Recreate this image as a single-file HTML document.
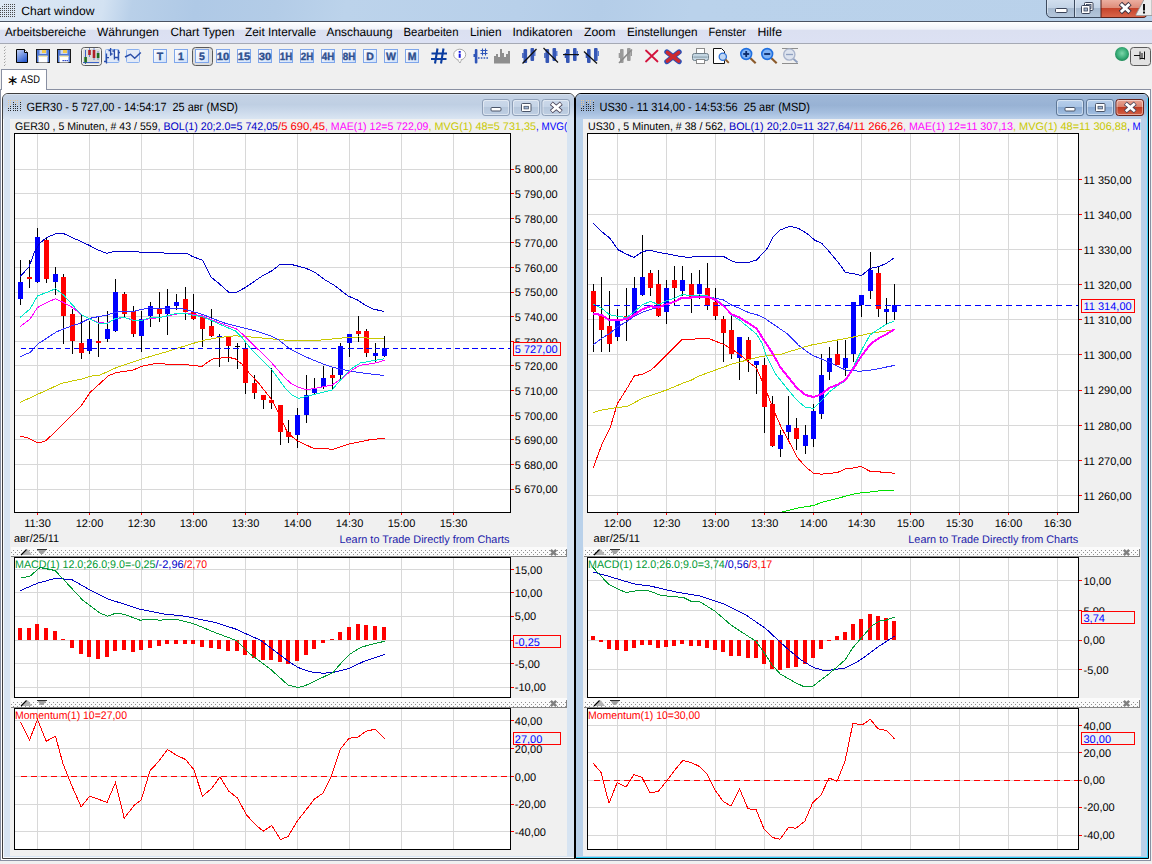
<!DOCTYPE html>
<html><head><meta charset="utf-8"><title>Chart window</title>
<style>
html,body{margin:0;padding:0;background:#F0F0F0;}
body{width:1152px;height:864px;overflow:hidden;position:relative;font-family:"Liberation Sans", Arial, sans-serif;}
.abs{position:absolute;}
#titlebar{left:0;top:0;width:1152px;height:21px;background:linear-gradient(100deg,#DCE8F5 0,#D3E2F2 9%,#B9D0E9 11.5%,#AFC9E6 17%,#B3CCE7 24%,#BCD3EB 30%,#B8D0EA 45%,#B4CDE8 52%,#BAD2EB 60%,#B9D1EA 100%);}
#menubar{left:0;top:22px;width:1152px;height:21px;background:linear-gradient(180deg,#FFFFFF 0,#F1F3FA 34%,#DBE0F1 40%,#DCE1F3 100%);}
#toolbar{left:0;top:44px;width:1152px;height:25px;background:#F0F0F0;}
.win{box-sizing:border-box;}
svg text{font-family:"Liberation Sans", Arial, sans-serif;white-space:pre;}
</style></head><body>
<div id="titlebar" class="abs"></div>
<div class="abs" style="left:0;top:21px;width:1152px;height:1px;background:#4A5262"></div>
<div id="menubar" class="abs"></div>
<div class="abs" style="left:0;top:43px;width:1152px;height:1px;background:#A5A9B4"></div>
<div id="toolbar" class="abs"></div>
<!-- tab strip / mdi client -->
<div class="abs" style="left:0;top:89px;width:1151px;height:772px;box-sizing:border-box;border:1px solid #8990A2;background:#fff"></div>
<div class="abs" style="left:1px;top:69px;width:46px;height:21px;background:#fff;border:1px solid #8990A2;border-bottom:none;box-sizing:border-box"></div>
<!-- left window (inactive) -->
<div class="abs win" style="left:2px;top:93px;width:573px;height:766px;border:1px solid #3E3E3E;border-radius:6px 6px 0 0;background:#D7E4F2"></div>
<div class="abs" style="left:3px;top:94px;width:571px;height:25px;border-radius:5px 5px 0 0;background:linear-gradient(180deg,#E0E9F4 0,#C5D3E5 6%,#BFCFE3 42%,#CCDAEB 72%,#DAE5F2 100%)"></div>
<div class="abs" style="left:3px;top:119px;width:1px;height:739px;background:#F4F8FC"></div>
<div class="abs" style="left:3px;top:857px;width:571px;height:1px;background:#F8FAFD"></div>
<div class="abs" style="left:10px;top:119px;width:557px;height:737px;background:#F0F0F0"></div>
<!-- right window (active) -->
<div class="abs win" style="left:575px;top:93px;width:574px;height:766px;border:1px solid #000;border-radius:6px 6px 0 0;background:#B9D1EA"></div>
<div class="abs" style="left:576px;top:94px;width:572px;height:25px;border-radius:5px 5px 0 0;background:linear-gradient(180deg,#C8D8EC 0,#9FB8D8 6%,#98B2D4 45%,#A6BFDF 75%,#BBD0EA 100%)"></div>
<div class="abs" style="left:574px;top:98px;width:1px;height:761px;background:#000"></div>
<div class="abs" style="left:1147px;top:98px;width:1px;height:760px;background:#3FD6FF"></div>
<div class="abs" style="left:576px;top:857px;width:572px;height:1px;background:#28CFF8"></div>
<div class="abs" style="left:583px;top:119px;width:558px;height:737px;background:#F0F0F0"></div>
<!-- bottom -->
<div class="abs" style="left:0;top:861px;width:1152px;height:3px;background:#F0F0F0"></div>
<svg class="abs" style="left:0;top:0" width="1152" height="864" viewBox="0 0 1152 864" shape-rendering="crispEdges" text-rendering="geometricPrecision">
<defs><pattern id="dots" width="4" height="4" patternUnits="userSpaceOnUse"><rect x="1" y="2" width="1" height="1" fill="#909090"/><rect x="3" y="0" width="1" height="1" fill="#909090"/></pattern><clipPath id="clipL"><rect x="10" y="119" width="557" height="737"/></clipPath><clipPath id="clipR"><rect x="583" y="119" width="558" height="737"/></clipPath></defs>
<g clip-path="url(#clipL)"><rect x="14" y="133" width="497" height="380" fill="#000" /><rect x="15" y="134" width="495" height="378" fill="#fff" /><rect x="37" y="134" width="1" height="378" fill="#D8D8D8" /><rect x="89" y="134" width="1" height="378" fill="#D8D8D8" /><rect x="141" y="134" width="1" height="378" fill="#D8D8D8" /><rect x="193" y="134" width="1" height="378" fill="#D8D8D8" /><rect x="245" y="134" width="1" height="378" fill="#D8D8D8" /><rect x="297" y="134" width="1" height="378" fill="#D8D8D8" /><rect x="349" y="134" width="1" height="378" fill="#D8D8D8" /><rect x="401" y="134" width="1" height="378" fill="#D8D8D8" /><rect x="453" y="134" width="1" height="378" fill="#D8D8D8" /><rect x="15" y="169" width="495" height="1" fill="#D8D8D8" /><rect x="15" y="193" width="495" height="1" fill="#D8D8D8" /><rect x="15" y="218" width="495" height="1" fill="#D8D8D8" /><rect x="15" y="242" width="495" height="1" fill="#D8D8D8" /><rect x="15" y="267" width="495" height="1" fill="#D8D8D8" /><rect x="15" y="292" width="495" height="1" fill="#D8D8D8" /><rect x="15" y="316" width="495" height="1" fill="#D8D8D8" /><rect x="15" y="341" width="495" height="1" fill="#D8D8D8" /><rect x="15" y="365" width="495" height="1" fill="#D8D8D8" /><rect x="15" y="390" width="495" height="1" fill="#D8D8D8" /><rect x="15" y="415" width="495" height="1" fill="#D8D8D8" /><rect x="15" y="439" width="495" height="1" fill="#D8D8D8" /><rect x="15" y="464" width="495" height="1" fill="#D8D8D8" /><rect x="15" y="489" width="495" height="1" fill="#D8D8D8" /><rect x="20" y="260" width="1" height="45" fill="#000" /><rect x="18" y="282" width="5" height="17" fill="#0000FF" /><rect x="29" y="260" width="1" height="28" fill="#000" /><rect x="27" y="277" width="5" height="2" fill="#FF0000" /><rect x="37" y="228" width="1" height="55" fill="#000" /><rect x="35" y="237" width="5" height="45" fill="#0000FF" /><rect x="46" y="238" width="1" height="45" fill="#000" /><rect x="44" y="240" width="5" height="39" fill="#FF0000" /><rect x="55" y="267" width="1" height="28" fill="#000" /><rect x="53" y="274" width="5" height="8" fill="#0000FF" /><rect x="63" y="274" width="1" height="70" fill="#000" /><rect x="61" y="277" width="5" height="39" fill="#FF0000" /><rect x="72" y="309" width="1" height="45" fill="#000" /><rect x="70" y="314" width="5" height="27" fill="#FF0000" /><rect x="81" y="315" width="1" height="44" fill="#000" /><rect x="79" y="343" width="5" height="10" fill="#FF0000" /><rect x="89" y="321" width="1" height="33" fill="#000" /><rect x="87" y="339" width="5" height="12" fill="#0000FF" /><rect x="98" y="316" width="1" height="41" fill="#000" /><rect x="96" y="341" width="5" height="2" fill="#FF0000" /><rect x="107" y="311" width="1" height="31" fill="#000" /><rect x="105" y="329" width="5" height="10" fill="#0000FF" /><rect x="115" y="279" width="1" height="53" fill="#000" /><rect x="113" y="292" width="5" height="39" fill="#0000FF" /><rect x="124" y="292" width="1" height="25" fill="#000" /><rect x="122" y="294" width="5" height="20" fill="#FF0000" /><rect x="133" y="306" width="1" height="31" fill="#000" /><rect x="131" y="311" width="5" height="23" fill="#FF0000" /><rect x="141" y="311" width="1" height="41" fill="#000" /><rect x="139" y="319" width="5" height="17" fill="#0000FF" /><rect x="150" y="302" width="1" height="25" fill="#000" /><rect x="148" y="306" width="5" height="10" fill="#0000FF" /><rect x="159" y="292" width="1" height="30" fill="#000" /><rect x="157" y="309" width="5" height="5" fill="#FF0000" /><rect x="167" y="289" width="1" height="46" fill="#000" /><rect x="165" y="306" width="5" height="8" fill="#0000FF" /><rect x="176" y="294" width="1" height="16" fill="#000" /><rect x="174" y="302" width="5" height="4" fill="#0000FF" /><rect x="185" y="287" width="1" height="33" fill="#000" /><rect x="183" y="299" width="5" height="13" fill="#FF0000" /><rect x="193" y="294" width="1" height="26" fill="#000" /><rect x="191" y="312" width="5" height="7" fill="#FF0000" /><rect x="202" y="317" width="1" height="30" fill="#000" /><rect x="200" y="317" width="5" height="12" fill="#FF0000" /><rect x="211" y="309" width="1" height="28" fill="#000" /><rect x="209" y="326" width="5" height="10" fill="#FF0000" /><rect x="219" y="334" width="1" height="33" fill="#000" /><rect x="217" y="336" width="5" height="2" fill="#0000FF" /><rect x="228" y="336" width="1" height="26" fill="#000" /><rect x="226" y="336" width="5" height="10" fill="#FF0000" /><rect x="237" y="343" width="1" height="26" fill="#000" /><rect x="235" y="346" width="5" height="1" fill="#000" /><rect x="245" y="341" width="1" height="53" fill="#000" /><rect x="243" y="348" width="5" height="35" fill="#FF0000" /><rect x="254" y="375" width="1" height="24" fill="#000" /><rect x="252" y="383" width="5" height="10" fill="#FF0000" /><rect x="263" y="395" width="1" height="14" fill="#000" /><rect x="261" y="395" width="5" height="5" fill="#FF0000" /><rect x="271" y="368" width="1" height="41" fill="#000" /><rect x="269" y="400" width="5" height="3" fill="#FF0000" /><rect x="280" y="405" width="1" height="40" fill="#000" /><rect x="278" y="405" width="5" height="27" fill="#FF0000" /><rect x="288" y="420" width="1" height="23" fill="#000" /><rect x="286" y="432" width="5" height="5" fill="#FF0000" /><rect x="297" y="408" width="1" height="40" fill="#000" /><rect x="295" y="415" width="5" height="20" fill="#0000FF" /><rect x="306" y="375" width="1" height="48" fill="#000" /><rect x="304" y="395" width="5" height="20" fill="#0000FF" /><rect x="314" y="378" width="1" height="17" fill="#000" /><rect x="312" y="388" width="5" height="5" fill="#0000FF" /><rect x="323" y="366" width="1" height="23" fill="#000" /><rect x="321" y="378" width="5" height="9" fill="#0000FF" /><rect x="332" y="368" width="1" height="21" fill="#000" /><rect x="330" y="375" width="5" height="3" fill="#FF0000" /><rect x="340" y="343" width="1" height="36" fill="#000" /><rect x="338" y="346" width="5" height="29" fill="#0000FF" /><rect x="349" y="334" width="1" height="23" fill="#000" /><rect x="347" y="334" width="5" height="9" fill="#0000FF" /><rect x="358" y="316" width="1" height="26" fill="#000" /><rect x="356" y="331" width="5" height="3" fill="#FF0000" /><rect x="366" y="329" width="1" height="28" fill="#000" /><rect x="364" y="331" width="5" height="22" fill="#FF0000" /><rect x="375" y="343" width="1" height="19" fill="#000" /><rect x="373" y="353" width="5" height="3" fill="#0000FF" /><rect x="384" y="336" width="1" height="21" fill="#000" /><rect x="382" y="348" width="5" height="8" fill="#0000FF" /><polyline points="20.0,276.7 29.2,266.7 34.0,253.0 40.0,243.0 46.7,237.5 55.8,233.7 64.0,233.7 71.7,237.5 81.7,241.7 90.0,245.8 98.3,250.0 106.7,253.3 113.3,251.7 136.7,251.7 141.7,252.5 162.5,252.5 165.0,253.3 186.7,253.3 192.0,256.3 202.8,260.3 211.0,277.0 218.7,283.3 228.7,292.2 237.0,292.2 245.3,287.5 263.7,275.0 272.0,270.8 280.3,264.2 290.3,264.2 305.3,268.0 315.3,272.5 325.3,280.0 333.7,285.0 348.7,296.3 357.0,299.7 365.3,305.3 373.7,309.2 384.5,311.5" fill="none" stroke="#0000C8" stroke-width="1" /><polyline points="20.0,436.3 26.7,437.5 38.3,443.0 45.8,440.8 68.3,419.0 81.7,405.0 90.0,392.5 98.3,385.0 108.3,375.8 116.7,372.5 133.3,370.0 141.7,366.3 156.7,363.3 166.7,364.2 183.3,364.2 192.0,365.5 202.0,366.3 212.0,359.2 227.0,357.2 235.3,358.7 242.0,364.2 248.7,372.5 258.7,383.3 272.0,400.0 278.7,413.3 287.0,431.7 292.0,436.7 297.5,440.8 313.3,448.3 333.3,449.2 348.3,444.2 370.0,439.7 384.5,438.3" fill="none" stroke="#FF0000" stroke-width="1" /><polyline points="20.0,402.5 38.3,394.0 61.7,383.3 81.7,379.0 90.0,376.3 100.0,375.0 116.7,367.5 141.7,359.0 166.7,351.7 192.0,343.7 205.3,340.0 218.7,337.5 235.3,335.8 247.0,336.7 275.3,339.2 292.0,340.8 308.7,340.8 325.3,339.7 342.0,338.0 358.7,337.0 372.0,338.7 384.5,338.0" fill="none" stroke="#C8C800" stroke-width="1" /><polyline points="20.0,356.7 30.0,352.5 38.3,343.7 56.7,331.7 71.7,325.8 80.0,323.3 90.0,318.3 106.7,315.0 120.0,311.3 133.3,311.3 148.3,308.0 180.0,308.3 192.0,311.3 202.0,314.2 212.0,318.3 225.3,323.3 245.3,328.3 255.3,330.8 270.3,335.8 278.7,340.0 290.3,349.2 305.3,356.7 323.7,364.2 333.7,367.5 350.3,371.3 365.3,373.3 384.5,375.5" fill="none" stroke="#3030FF" stroke-width="1" /><polyline points="20.0,326.7 30.0,319.0 37.5,307.5 46.7,302.5 55.5,298.7 63.5,302.5 72.5,307.5 81.7,315.0 90.0,319.0 98.3,322.5 106.7,323.3 115.5,318.7 124.5,317.5 133.3,320.0 141.7,320.0 150.5,318.7 159.5,317.5 167.5,316.0 176.5,314.0 185.5,313.0 192.0,314.2 202.0,315.8 212.0,320.0 225.3,325.0 237.0,329.2 245.3,336.7 258.7,350.0 272.0,363.3 285.3,378.3 292.0,384.2 298.7,387.5 307.0,389.7 315.3,388.3 332.0,385.0 342.0,378.3 352.0,370.0 360.3,365.3 375.3,363.0 384.5,360.3" fill="none" stroke="#FF00FF" stroke-width="1" /><polyline points="20.0,317.5 30.0,309.0 37.5,295.8 46.7,292.5 55.5,288.7 63.5,295.0 72.5,305.0 81.7,315.0 90.0,319.0 98.3,323.3 106.7,324.0 115.5,318.3 124.5,317.5 133.3,320.3 141.7,320.3 150.5,317.5 159.5,317.5 167.5,315.8 176.5,313.3 185.5,313.3 192.0,315.0 202.0,316.7 212.0,320.8 225.3,326.7 235.3,330.8 242.0,337.5 250.3,348.3 262.0,360.0 272.0,370.0 285.3,388.3 292.0,395.0 298.7,398.3 308.7,395.8 332.0,390.0 342.0,378.3 352.0,368.3 360.3,363.0 375.3,360.3 384.5,358.7" fill="none" stroke="#00E8C8" stroke-width="1" /><line x1="20.5" y1="348.5" x2="510" y2="348.5" stroke="#0000FF" stroke-width="1" stroke-dasharray="5.5 3.36"/><rect x="511" y="169" width="3" height="1" fill="#FF0000" /><text x="514.8" y="173.3" font-size="11" fill="#000" text-anchor="start" >5 800,00</text><rect x="511" y="193" width="3" height="1" fill="#FF0000" /><text x="514.8" y="197.9" font-size="11" fill="#000" text-anchor="start" >5 790,00</text><rect x="511" y="218" width="3" height="1" fill="#FF0000" /><text x="514.8" y="222.5" font-size="11" fill="#000" text-anchor="start" >5 780,00</text><rect x="511" y="242" width="3" height="1" fill="#FF0000" /><text x="514.8" y="247.2" font-size="11" fill="#000" text-anchor="start" >5 770,00</text><rect x="511" y="267" width="3" height="1" fill="#FF0000" /><text x="514.8" y="271.8" font-size="11" fill="#000" text-anchor="start" >5 760,00</text><rect x="511" y="292" width="3" height="1" fill="#FF0000" /><text x="514.8" y="296.4" font-size="11" fill="#000" text-anchor="start" >5 750,00</text><rect x="511" y="316" width="3" height="1" fill="#FF0000" /><text x="514.8" y="321.0" font-size="11" fill="#000" text-anchor="start" >5 740,00</text><rect x="511" y="341" width="3" height="1" fill="#FF0000" /><text x="514.8" y="345.6" font-size="11" fill="#000" text-anchor="start" >5 730,00</text><rect x="511" y="365" width="3" height="1" fill="#FF0000" /><text x="514.8" y="370.3" font-size="11" fill="#000" text-anchor="start" >5 720,00</text><rect x="511" y="390" width="3" height="1" fill="#FF0000" /><text x="514.8" y="394.9" font-size="11" fill="#000" text-anchor="start" >5 710,00</text><rect x="511" y="415" width="3" height="1" fill="#FF0000" /><text x="514.8" y="419.5" font-size="11" fill="#000" text-anchor="start" >5 700,00</text><rect x="511" y="439" width="3" height="1" fill="#FF0000" /><text x="514.8" y="444.1" font-size="11" fill="#000" text-anchor="start" >5 690,00</text><rect x="511" y="464" width="3" height="1" fill="#FF0000" /><text x="514.8" y="468.7" font-size="11" fill="#000" text-anchor="start" >5 680,00</text><rect x="511" y="489" width="3" height="1" fill="#FF0000" /><text x="514.8" y="493.4" font-size="11" fill="#000" text-anchor="start" >5 670,00</text><rect x="513.5" y="342" width="47" height="13" fill="#F0F0F0" stroke="#FF0000" stroke-width="1" shape-rendering="crispEdges"/><text x="514.8" y="352.8" font-size="11" fill="#0000FF" text-anchor="start" >5 727,00</text><rect x="37" y="513" width="1" height="2" fill="#FF0000" /><text x="37.5" y="527.0" font-size="11" fill="#000" text-anchor="middle" >11:30</text><rect x="89" y="513" width="1" height="2" fill="#FF0000" /><text x="89.5" y="527.0" font-size="11" fill="#000" text-anchor="middle" >12:00</text><rect x="141" y="513" width="1" height="2" fill="#FF0000" /><text x="141.5" y="527.0" font-size="11" fill="#000" text-anchor="middle" >12:30</text><rect x="193" y="513" width="1" height="2" fill="#FF0000" /><text x="193.5" y="527.0" font-size="11" fill="#000" text-anchor="middle" >13:00</text><rect x="245" y="513" width="1" height="2" fill="#FF0000" /><text x="245.5" y="527.0" font-size="11" fill="#000" text-anchor="middle" >13:30</text><rect x="297" y="513" width="1" height="2" fill="#FF0000" /><text x="297.5" y="527.0" font-size="11" fill="#000" text-anchor="middle" >14:00</text><rect x="349" y="513" width="1" height="2" fill="#FF0000" /><text x="349.5" y="527.0" font-size="11" fill="#000" text-anchor="middle" >14:30</text><rect x="401" y="513" width="1" height="2" fill="#FF0000" /><text x="401.5" y="527.0" font-size="11" fill="#000" text-anchor="middle" >15:00</text><rect x="453" y="513" width="1" height="2" fill="#FF0000" /><text x="453.5" y="527.0" font-size="11" fill="#000" text-anchor="middle" >15:30</text><text x="14.0" y="541.5" font-size="11" fill="#000" text-anchor="start" textLength="45.0" lengthAdjust="spacingAndGlyphs" >авг/25/11</text><text x="509.5" y="543.0" font-size="11" fill="#2222AA" text-anchor="end" textLength="170.0" lengthAdjust="spacingAndGlyphs" >Learn to Trade Directly from Charts</text><rect x="11" y="547" width="556" height="9" fill="#FBFBFB" /><rect x="11" y="550" width="555" height="6" fill="url(#dots)"/><rect x="11" y="556" width="556" height="1" fill="#858585" /><rect x="566" y="549" width="1" height="8" fill="#858585" /><polygon points="21,555 26.5,549.5 28,549.5 32,555" fill="#B4B4B4" shape-rendering="auto"/><polyline points="21,555 26.5,549.5" stroke="#000" stroke-width="1.1" fill="none" shape-rendering="auto"/><polygon points="37,549 47,549 43,554 40.5,554" fill="#A0A0A0" shape-rendering="auto"/><rect x="37" y="549" width="10" height="1" fill="#303030" /><rect x="550" y="549" width="7" height="7" fill="#fff" /><path d="M550.8,549.8 L556.2,555.2 M556.2,549.8 L550.8,555.2" stroke="#808080" stroke-width="2.6" fill="none" shape-rendering="auto"/><rect x="14" y="557" width="497" height="141" fill="#000" /><rect x="15" y="558" width="495" height="139" fill="#fff" /><rect x="37" y="558" width="1" height="139" fill="#D8D8D8" /><rect x="89" y="558" width="1" height="139" fill="#D8D8D8" /><rect x="141" y="558" width="1" height="139" fill="#D8D8D8" /><rect x="193" y="558" width="1" height="139" fill="#D8D8D8" /><rect x="245" y="558" width="1" height="139" fill="#D8D8D8" /><rect x="297" y="558" width="1" height="139" fill="#D8D8D8" /><rect x="349" y="558" width="1" height="139" fill="#D8D8D8" /><rect x="401" y="558" width="1" height="139" fill="#D8D8D8" /><rect x="453" y="558" width="1" height="139" fill="#D8D8D8" /><rect x="15" y="569" width="495" height="1" fill="#D8D8D8" /><rect x="15" y="592" width="495" height="1" fill="#D8D8D8" /><rect x="15" y="616" width="495" height="1" fill="#D8D8D8" /><rect x="15" y="640" width="495" height="1" fill="#D8D8D8" /><rect x="15" y="663" width="495" height="1" fill="#D8D8D8" /><rect x="15" y="687" width="495" height="1" fill="#D8D8D8" /><rect x="18" y="628" width="4" height="12" fill="#FF0000" /><rect x="27" y="628" width="4" height="12" fill="#FF0000" /><rect x="35" y="624" width="4" height="16" fill="#FF0000" /><rect x="44" y="628" width="4" height="12" fill="#FF0000" /><rect x="53" y="631" width="4" height="9" fill="#FF0000" /><rect x="61" y="639" width="4" height="1" fill="#FF0000" /><rect x="70" y="640" width="4" height="8" fill="#FF0000" /><rect x="79" y="640" width="4" height="14" fill="#FF0000" /><rect x="87" y="640" width="4" height="17" fill="#FF0000" /><rect x="96" y="640" width="4" height="19" fill="#FF0000" /><rect x="105" y="640" width="4" height="17" fill="#FF0000" /><rect x="113" y="640" width="4" height="11" fill="#FF0000" /><rect x="122" y="640" width="4" height="10" fill="#FF0000" /><rect x="131" y="640" width="4" height="12" fill="#FF0000" /><rect x="139" y="640" width="4" height="10" fill="#FF0000" /><rect x="148" y="640" width="4" height="8" fill="#FF0000" /><rect x="157" y="640" width="4" height="6" fill="#FF0000" /><rect x="165" y="640" width="4" height="4" fill="#FF0000" /><rect x="174" y="640" width="4" height="4" fill="#FF0000" /><rect x="183" y="640" width="4" height="4" fill="#FF0000" /><rect x="191" y="640" width="4" height="4" fill="#FF0000" /><rect x="200" y="640" width="4" height="7" fill="#FF0000" /><rect x="209" y="640" width="4" height="8" fill="#FF0000" /><rect x="217" y="640" width="4" height="9" fill="#FF0000" /><rect x="226" y="640" width="4" height="11" fill="#FF0000" /><rect x="235" y="640" width="4" height="11" fill="#FF0000" /><rect x="243" y="640" width="4" height="15" fill="#FF0000" /><rect x="252" y="640" width="4" height="18" fill="#FF0000" /><rect x="261" y="640" width="4" height="20" fill="#FF0000" /><rect x="269" y="640" width="4" height="20" fill="#FF0000" /><rect x="278" y="640" width="4" height="22" fill="#FF0000" /><rect x="286" y="640" width="4" height="24" fill="#FF0000" /><rect x="295" y="640" width="4" height="21" fill="#FF0000" /><rect x="304" y="640" width="4" height="15" fill="#FF0000" /><rect x="312" y="640" width="4" height="9" fill="#FF0000" /><rect x="321" y="640" width="4" height="3" fill="#FF0000" /><rect x="330" y="639" width="4" height="1" fill="#FF0000" /><rect x="338" y="632" width="4" height="8" fill="#FF0000" /><rect x="347" y="627" width="4" height="13" fill="#FF0000" /><rect x="356" y="624" width="4" height="16" fill="#FF0000" /><rect x="364" y="625" width="4" height="15" fill="#FF0000" /><rect x="373" y="626" width="4" height="14" fill="#FF0000" /><rect x="382" y="627" width="4" height="13" fill="#FF0000" /><polyline points="20.5,590.5 37.5,583.2 56.2,578.2 72.5,580.0 90.0,590.0 107.5,598.8 140.0,609.2 162.5,613.8 185.0,616.2 215.0,622.5 235.0,628.8 260.0,640.0 275.0,651.2 288.0,661.0 298.0,667.5 310.5,671.8 323.0,673.2 333.0,672.5 348.0,668.8 363.0,661.8 385.0,654.2" fill="none" stroke="#0000C8" stroke-width="1" /><polyline points="20.5,578.2 30.0,576.2 40.0,567.5 55.0,570.5 67.5,583.8 82.5,600.0 100.0,613.0 107.5,616.2 116.2,613.0 125.0,614.5 140.0,620.2 150.0,619.0 160.0,620.2 175.0,619.0 193.8,623.8 215.0,632.5 236.2,640.5 250.0,653.8 270.0,668.8 288.0,685.0 298.0,687.5 305.5,685.5 333.0,672.5 340.5,663.8 350.5,653.8 360.5,647.5 370.5,644.5 385.0,641.2" fill="none" stroke="#009933" stroke-width="1" /><rect x="511" y="569" width="3" height="1" fill="#FF0000" /><text x="514.8" y="573.8" font-size="11" fill="#000" text-anchor="start" >15,00</text><rect x="511" y="592" width="3" height="1" fill="#FF0000" /><text x="514.8" y="596.8" font-size="11" fill="#000" text-anchor="start" >10,00</text><rect x="511" y="616" width="3" height="1" fill="#FF0000" /><text x="514.8" y="620.3" font-size="11" fill="#000" text-anchor="start" >5,00</text><rect x="511" y="640" width="3" height="1" fill="#FF0000" /><text x="514.8" y="644.3" font-size="11" fill="#000" text-anchor="start" >0,00</text><rect x="511" y="663" width="3" height="1" fill="#FF0000" /><text x="514.8" y="667.8" font-size="11" fill="#000" text-anchor="start" >-5,00</text><rect x="511" y="687" width="3" height="1" fill="#FF0000" /><text x="514.8" y="691.3" font-size="11" fill="#000" text-anchor="start" >-10,00</text><rect x="513.5" y="635" width="47" height="12" fill="#F0F0F0" stroke="#FF0000" stroke-width="1" shape-rendering="crispEdges"/><text x="514.8" y="645.8" font-size="11" fill="#0000FF" text-anchor="start" >-0,25</text><text x="15.0" y="567.7" font-size="11" fill="#009933" text-anchor="start" textLength="140.5" lengthAdjust="spacingAndGlyphs" >MACD(1) 12.0;26.0;9.0=-0,25</text><text x="155.5" y="567.7" font-size="11" fill="#0000C8" text-anchor="start" textLength="28.2" lengthAdjust="spacingAndGlyphs" >/-2,96</text><text x="183.8" y="567.7" font-size="11" fill="#FF0000" text-anchor="start" textLength="23.2" lengthAdjust="spacingAndGlyphs" >/2,70</text><rect x="11" y="698" width="556" height="9" fill="#FBFBFB" /><rect x="11" y="701" width="555" height="6" fill="url(#dots)"/><rect x="11" y="707" width="556" height="1" fill="#858585" /><rect x="566" y="700" width="1" height="8" fill="#858585" /><polygon points="21,706 26.5,700.5 28,700.5 32,706" fill="#B4B4B4" shape-rendering="auto"/><polyline points="21,706 26.5,700.5" stroke="#000" stroke-width="1.1" fill="none" shape-rendering="auto"/><polygon points="37,700 47,700 43,705 40.5,705" fill="#A0A0A0" shape-rendering="auto"/><rect x="37" y="700" width="10" height="1" fill="#303030" /><rect x="550" y="700" width="7" height="7" fill="#fff" /><path d="M550.8,700.8 L556.2,706.2 M556.2,700.8 L550.8,706.2" stroke="#808080" stroke-width="2.6" fill="none" shape-rendering="auto"/><rect x="14" y="708" width="497" height="142" fill="#000" /><rect x="15" y="709" width="495" height="140" fill="#fff" /><rect x="37" y="709" width="1" height="140" fill="#D8D8D8" /><rect x="89" y="709" width="1" height="140" fill="#D8D8D8" /><rect x="141" y="709" width="1" height="140" fill="#D8D8D8" /><rect x="193" y="709" width="1" height="140" fill="#D8D8D8" /><rect x="245" y="709" width="1" height="140" fill="#D8D8D8" /><rect x="297" y="709" width="1" height="140" fill="#D8D8D8" /><rect x="349" y="709" width="1" height="140" fill="#D8D8D8" /><rect x="401" y="709" width="1" height="140" fill="#D8D8D8" /><rect x="453" y="709" width="1" height="140" fill="#D8D8D8" /><rect x="15" y="720" width="495" height="1" fill="#D8D8D8" /><rect x="15" y="748" width="495" height="1" fill="#D8D8D8" /><rect x="15" y="776" width="495" height="1" fill="#D8D8D8" /><rect x="15" y="804" width="495" height="1" fill="#D8D8D8" /><rect x="15" y="831" width="495" height="1" fill="#D8D8D8" /><line x1="20.5" y1="776.5" x2="510" y2="776.5" stroke="#FF0000" stroke-width="1" stroke-dasharray="6.5 3.5"/><polyline points="20.5,722.0 29.5,740.0 37.5,719.5 46.2,741.2 55.5,736.2 63.0,763.8 72.0,786.2 81.2,807.0 89.5,796.2 98.5,799.2 107.0,802.5 115.5,782.5 124.2,818.2 134.5,805.0 141.2,800.0 150.0,770.8 158.8,761.2 167.5,749.5 176.2,755.0 185.5,759.5 193.8,769.5 202.5,796.2 211.2,788.8 220.0,777.0 228.8,791.2 237.5,798.0 246.2,814.5 255.0,824.2 263.2,831.2 271.8,825.5 280.5,839.5 288.0,836.5 298.0,820.0 306.0,810.0 314.2,799.2 323.0,793.2 331.8,775.0 340.5,748.8 349.2,738.2 358.0,737.0 366.2,731.2 375.0,729.2 385.0,738.8" fill="none" stroke="#FF0000" stroke-width="1" /><rect x="511" y="720" width="3" height="1" fill="#FF0000" /><text x="514.8" y="724.8" font-size="11" fill="#000" text-anchor="start" >40,00</text><rect x="511" y="748" width="3" height="1" fill="#FF0000" /><text x="514.8" y="752.8" font-size="11" fill="#000" text-anchor="start" >20,00</text><rect x="511" y="776" width="3" height="1" fill="#FF0000" /><text x="514.8" y="780.8" font-size="11" fill="#000" text-anchor="start" >0,00</text><rect x="511" y="804" width="3" height="1" fill="#FF0000" /><text x="514.8" y="808.3" font-size="11" fill="#000" text-anchor="start" >-20,00</text><rect x="511" y="831" width="3" height="1" fill="#FF0000" /><text x="514.8" y="835.8" font-size="11" fill="#000" text-anchor="start" >-40,00</text><rect x="513.5" y="732" width="47" height="12" fill="#F0F0F0" stroke="#FF0000" stroke-width="1" shape-rendering="crispEdges"/><text x="514.8" y="742.8" font-size="11" fill="#0000FF" text-anchor="start" >27,00</text><text x="15.0" y="719.0" font-size="11" fill="#FF0000" text-anchor="start" textLength="112.0" lengthAdjust="spacingAndGlyphs" >Momentum(1) 10=27,00</text><text x="15.0" y="129.5" font-size="11" fill="#000" text-anchor="start" textLength="142.5" lengthAdjust="spacingAndGlyphs" >GER30 , 5 Minuten, # 43 / 559</text><text x="157.5" y="129.5" font-size="11" fill="#0000C8" text-anchor="start" textLength="120.5" lengthAdjust="spacingAndGlyphs" >, BOL(1) 20;2.0=5 742,05</text><text x="278.0" y="129.5" font-size="11" fill="#FF0000" text-anchor="start" textLength="47.0" lengthAdjust="spacingAndGlyphs" >/5 690,45</text><text x="325.0" y="129.5" font-size="11" fill="#FF00FF" text-anchor="start" textLength="103.5" lengthAdjust="spacingAndGlyphs" >, MAE(1) 12=5 722,09</text><text x="428.5" y="129.5" font-size="11" fill="#C8C800" text-anchor="start" textLength="107.5" lengthAdjust="spacingAndGlyphs" >, MVG(1) 48=5 731,35</text><text x="536.0" y="129.5" font-size="11" fill="#0000FF" text-anchor="start" textLength="40.0" lengthAdjust="spacingAndGlyphs" >, MVG(1)</text></g>
<g clip-path="url(#clipR)"><rect x="587" y="133" width="492" height="380" fill="#000" /><rect x="588" y="134" width="490" height="378" fill="#fff" /><rect x="617" y="134" width="1" height="378" fill="#D8D8D8" /><rect x="666" y="134" width="1" height="378" fill="#D8D8D8" /><rect x="715" y="134" width="1" height="378" fill="#D8D8D8" /><rect x="764" y="134" width="1" height="378" fill="#D8D8D8" /><rect x="813" y="134" width="1" height="378" fill="#D8D8D8" /><rect x="861" y="134" width="1" height="378" fill="#D8D8D8" /><rect x="910" y="134" width="1" height="378" fill="#D8D8D8" /><rect x="959" y="134" width="1" height="378" fill="#D8D8D8" /><rect x="1008" y="134" width="1" height="378" fill="#D8D8D8" /><rect x="1057" y="134" width="1" height="378" fill="#D8D8D8" /><rect x="588" y="179" width="490" height="1" fill="#D8D8D8" /><rect x="588" y="214" width="490" height="1" fill="#D8D8D8" /><rect x="588" y="249" width="490" height="1" fill="#D8D8D8" /><rect x="588" y="284" width="490" height="1" fill="#D8D8D8" /><rect x="588" y="319" width="490" height="1" fill="#D8D8D8" /><rect x="588" y="354" width="490" height="1" fill="#D8D8D8" /><rect x="588" y="390" width="490" height="1" fill="#D8D8D8" /><rect x="588" y="425" width="490" height="1" fill="#D8D8D8" /><rect x="588" y="460" width="490" height="1" fill="#D8D8D8" /><rect x="588" y="495" width="490" height="1" fill="#D8D8D8" /><rect x="593" y="284" width="1" height="68" fill="#000" /><rect x="591" y="291" width="5" height="21" fill="#FF0000" /><rect x="601" y="277" width="1" height="75" fill="#000" /><rect x="599" y="316" width="5" height="14" fill="#FF0000" /><rect x="609" y="291" width="1" height="61" fill="#000" /><rect x="607" y="326" width="5" height="18" fill="#FF0000" /><rect x="617" y="309" width="1" height="32" fill="#000" /><rect x="615" y="321" width="5" height="16" fill="#0000FF" /><rect x="626" y="288" width="1" height="53" fill="#000" /><rect x="624" y="316" width="5" height="4" fill="#FF0000" /><rect x="634" y="277" width="1" height="38" fill="#000" /><rect x="632" y="288" width="5" height="27" fill="#0000FF" /><rect x="642" y="235" width="1" height="61" fill="#000" /><rect x="640" y="277" width="5" height="18" fill="#0000FF" /><rect x="650" y="270" width="1" height="26" fill="#000" /><rect x="648" y="273" width="5" height="15" fill="#FF0000" /><rect x="658" y="270" width="1" height="47" fill="#000" /><rect x="656" y="284" width="5" height="32" fill="#FF0000" /><rect x="666" y="280" width="1" height="44" fill="#000" /><rect x="664" y="288" width="5" height="24" fill="#0000FF" /><rect x="674" y="266" width="1" height="40" fill="#000" /><rect x="672" y="280" width="5" height="8" fill="#FF0000" /><rect x="682" y="266" width="1" height="30" fill="#000" /><rect x="680" y="280" width="5" height="11" fill="#0000FF" /><rect x="691" y="273" width="1" height="40" fill="#000" /><rect x="689" y="284" width="5" height="13" fill="#FF0000" /><rect x="699" y="270" width="1" height="29" fill="#000" /><rect x="697" y="284" width="5" height="10" fill="#0000FF" /><rect x="707" y="263" width="1" height="47" fill="#000" /><rect x="705" y="288" width="5" height="17" fill="#FF0000" /><rect x="715" y="288" width="1" height="32" fill="#000" /><rect x="713" y="302" width="5" height="14" fill="#FF0000" /><rect x="723" y="316" width="1" height="46" fill="#000" /><rect x="721" y="319" width="5" height="14" fill="#FF0000" /><rect x="731" y="314" width="1" height="45" fill="#000" /><rect x="729" y="330" width="5" height="24" fill="#FF0000" /><rect x="739" y="337" width="1" height="43" fill="#000" /><rect x="737" y="337" width="5" height="21" fill="#0000FF" /><rect x="748" y="337" width="1" height="35" fill="#000" /><rect x="746" y="340" width="5" height="20" fill="#FF0000" /><rect x="756" y="361" width="1" height="33" fill="#000" /><rect x="754" y="361" width="5" height="4" fill="#0000FF" /><rect x="764" y="358" width="1" height="75" fill="#000" /><rect x="762" y="365" width="5" height="42" fill="#FF0000" /><rect x="772" y="396" width="1" height="51" fill="#000" /><rect x="770" y="404" width="5" height="42" fill="#FF0000" /><rect x="780" y="430" width="1" height="27" fill="#000" /><rect x="778" y="435" width="5" height="14" fill="#0000FF" /><rect x="788" y="396" width="1" height="46" fill="#000" /><rect x="786" y="425" width="5" height="7" fill="#0000FF" /><rect x="796" y="418" width="1" height="32" fill="#000" /><rect x="794" y="428" width="5" height="11" fill="#FF0000" /><rect x="805" y="425" width="1" height="29" fill="#000" /><rect x="803" y="435" width="5" height="11" fill="#0000FF" /><rect x="813" y="404" width="1" height="43" fill="#000" /><rect x="811" y="411" width="5" height="28" fill="#0000FF" /><rect x="821" y="354" width="1" height="65" fill="#000" /><rect x="819" y="375" width="5" height="39" fill="#0000FF" /><rect x="829" y="347" width="1" height="33" fill="#000" /><rect x="827" y="358" width="5" height="14" fill="#0000FF" /><rect x="837" y="340" width="1" height="25" fill="#000" /><rect x="835" y="354" width="5" height="11" fill="#FF0000" /><rect x="845" y="340" width="1" height="36" fill="#000" /><rect x="843" y="358" width="5" height="10" fill="#0000FF" /><rect x="853" y="302" width="1" height="60" fill="#000" /><rect x="851" y="302" width="5" height="52" fill="#0000FF" /><rect x="861" y="295" width="1" height="22" fill="#000" /><rect x="859" y="295" width="5" height="10" fill="#0000FF" /><rect x="870" y="252" width="1" height="47" fill="#000" /><rect x="868" y="270" width="5" height="21" fill="#0000FF" /><rect x="878" y="267" width="1" height="50" fill="#000" /><rect x="876" y="273" width="5" height="36" fill="#FF0000" /><rect x="886" y="298" width="1" height="26" fill="#000" /><rect x="884" y="309" width="5" height="3" fill="#0000FF" /><rect x="894" y="284" width="1" height="36" fill="#000" /><rect x="892" y="305" width="5" height="7" fill="#0000FF" /><polyline points="593.3,223.0 601.7,231.7 610.0,238.3 618.0,249.7 626.7,254.2 633.7,257.5 642.5,251.7 650.0,250.0 658.3,252.5 666.7,253.7 676.7,255.8 688.3,257.5 696.7,256.3 723.3,256.3 731.7,260.8 736.7,262.5 748.3,262.5 756.7,260.0 762.0,254.0 766.7,249.2 773.3,236.7 780.0,230.0 790.0,226.3 798.3,228.3 806.7,233.3 815.0,240.3 821.7,243.3 830.0,252.5 838.3,262.5 845.5,272.5 853.5,273.7 861.5,275.5 870.5,268.3 878.5,266.7 886.5,263.3 894.5,257.5" fill="none" stroke="#0000C8" stroke-width="1" /><polyline points="593.3,467.5 601.7,445.0 610.0,428.3 617.5,403.3 626.5,389.2 634.5,375.8 642.5,374.2 650.5,370.3 655.8,365.8 666.5,355.0 682.5,339.2 690.0,340.0 698.3,338.3 708.3,338.3 716.7,341.7 723.5,344.2 731.5,349.2 739.5,354.2 748.5,361.7 756.5,368.3 761.7,380.0 767.5,394.2 775.0,413.3 781.7,428.3 788.3,440.0 796.7,456.7 805.5,466.7 813.5,473.3 821.5,474.2 837.5,472.5 845.5,468.7 853.5,468.0 860.8,466.3 870.0,471.3 883.3,472.2 895.0,473.3" fill="none" stroke="#FF0000" stroke-width="1" /><polyline points="593.3,412.5 601.7,410.0 617.5,407.5 627.5,406.3 642.5,398.3 666.5,390.0 682.5,383.3 690.0,380.8 699.5,375.8 715.5,370.0 731.5,364.2 748.5,359.7 756.5,357.5 766.7,355.8 781.7,354.0 810.0,345.3 837.5,340.0 853.5,337.0 870.5,333.3 894.5,329.7" fill="none" stroke="#C8C800" stroke-width="1" /><polyline points="781.7,512.0 796.7,508.3 813.5,505.5 821.5,502.5 837.5,498.3 856.7,493.3 870.0,492.0 883.3,490.3 895.0,490.0" fill="none" stroke="#00E000" stroke-width="1" /><polyline points="593.3,344.7 601.7,338.3 610.0,333.3 617.5,326.7 626.7,321.7 635.0,315.8 643.3,312.0 651.7,309.2 658.3,307.5 666.7,303.7 675.0,301.3 682.5,298.0 691.7,298.0 699.5,296.7 707.5,296.7 715.5,298.3 723.5,300.0 731.5,305.0 739.5,308.3 748.5,312.5 756.7,314.7 765.0,318.3 770.0,322.0 786.7,333.3 798.3,345.0 811.7,355.0 830.0,362.5 845.5,370.0 860.0,371.3 873.3,369.7 895.0,365.3" fill="none" stroke="#3030FF" stroke-width="1" /><polyline points="593.3,304.2 601.7,308.3 609.5,314.7 617.5,316.3 626.5,317.5 634.5,311.7 642.5,304.7 650.5,301.3 658.5,304.7 666.5,300.8 674.5,298.3 682.5,294.5 691.5,295.8 699.5,295.0 707.5,295.8 715.5,299.2 723.5,305.0 731.5,315.0 739.5,320.0 748.5,327.5 756.7,334.2 762.0,343.0 766.7,356.7 775.0,373.3 788.3,390.0 796.7,400.0 805.5,407.5 813.5,408.3 821.5,400.8 829.5,391.7 837.5,385.8 845.5,380.8 853.5,366.7 861.7,350.0 870.0,335.0 878.5,329.2 886.5,324.2 894.5,320.8" fill="none" stroke="#00E8C8" stroke-width="1" /><polyline points="593.3,313.7 601.7,315.0 609.5,320.0 617.5,320.0 626.5,319.2 634.5,314.7 642.5,309.2 650.5,306.2 658.5,307.5 666.5,304.2 674.5,301.7 682.5,297.5 691.5,297.5 699.5,296.7 707.5,296.7 715.5,300.0 723.5,305.8 731.5,314.2 739.5,317.5 748.5,323.3 756.7,328.7 765.0,341.7 772.5,353.3 780.5,367.5 788.5,377.5 796.5,387.5 805.5,395.0 813.5,397.0 821.5,394.2 829.5,387.8 837.5,384.7 845.5,380.0 853.5,368.3 861.7,355.8 870.5,344.2 878.5,338.3 886.5,334.2 894.5,329.2" fill="none" stroke="#FF00FF" stroke-width="2" /><line x1="593.5" y1="305.5" x2="1078" y2="305.5" stroke="#0000FF" stroke-width="1" stroke-dasharray="6 4.05"/><rect x="1079" y="179" width="3" height="1" fill="#FF0000" /><text x="1083.5" y="183.5" font-size="11" fill="#000" text-anchor="start" >11 350,00</text><rect x="1079" y="214" width="3" height="1" fill="#FF0000" /><text x="1083.5" y="218.6" font-size="11" fill="#000" text-anchor="start" >11 340,00</text><rect x="1079" y="249" width="3" height="1" fill="#FF0000" /><text x="1083.5" y="253.8" font-size="11" fill="#000" text-anchor="start" >11 330,00</text><rect x="1079" y="284" width="3" height="1" fill="#FF0000" /><text x="1083.5" y="288.9" font-size="11" fill="#000" text-anchor="start" >11 320,00</text><rect x="1079" y="319" width="3" height="1" fill="#FF0000" /><text x="1083.5" y="324.1" font-size="11" fill="#000" text-anchor="start" >11 310,00</text><rect x="1079" y="354" width="3" height="1" fill="#FF0000" /><text x="1083.5" y="359.2" font-size="11" fill="#000" text-anchor="start" >11 300,00</text><rect x="1079" y="390" width="3" height="1" fill="#FF0000" /><text x="1083.5" y="394.3" font-size="11" fill="#000" text-anchor="start" >11 290,00</text><rect x="1079" y="425" width="3" height="1" fill="#FF0000" /><text x="1083.5" y="429.5" font-size="11" fill="#000" text-anchor="start" >11 280,00</text><rect x="1079" y="460" width="3" height="1" fill="#FF0000" /><text x="1083.5" y="464.6" font-size="11" fill="#000" text-anchor="start" >11 270,00</text><rect x="1079" y="495" width="3" height="1" fill="#FF0000" /><text x="1083.5" y="499.8" font-size="11" fill="#000" text-anchor="start" >11 260,00</text><rect x="1081.5" y="299" width="53" height="13" fill="#F0F0F0" stroke="#FF0000" stroke-width="1" shape-rendering="crispEdges"/><text x="1083.5" y="309.8" font-size="11" fill="#0000FF" text-anchor="start" >11 314,00</text><rect x="617" y="513" width="1" height="2" fill="#FF0000" /><text x="617.5" y="527.0" font-size="11" fill="#000" text-anchor="middle" >12:00</text><rect x="666" y="513" width="1" height="2" fill="#FF0000" /><text x="666.5" y="527.0" font-size="11" fill="#000" text-anchor="middle" >12:30</text><rect x="715" y="513" width="1" height="2" fill="#FF0000" /><text x="715.5" y="527.0" font-size="11" fill="#000" text-anchor="middle" >13:00</text><rect x="764" y="513" width="1" height="2" fill="#FF0000" /><text x="764.5" y="527.0" font-size="11" fill="#000" text-anchor="middle" >13:30</text><rect x="813" y="513" width="1" height="2" fill="#FF0000" /><text x="813.5" y="527.0" font-size="11" fill="#000" text-anchor="middle" >14:00</text><rect x="861" y="513" width="1" height="2" fill="#FF0000" /><text x="861.5" y="527.0" font-size="11" fill="#000" text-anchor="middle" >14:30</text><rect x="910" y="513" width="1" height="2" fill="#FF0000" /><text x="910.5" y="527.0" font-size="11" fill="#000" text-anchor="middle" >15:00</text><rect x="959" y="513" width="1" height="2" fill="#FF0000" /><text x="959.5" y="527.0" font-size="11" fill="#000" text-anchor="middle" >15:30</text><rect x="1008" y="513" width="1" height="2" fill="#FF0000" /><text x="1008.5" y="527.0" font-size="11" fill="#000" text-anchor="middle" >16:00</text><rect x="1057" y="513" width="1" height="2" fill="#FF0000" /><text x="1057.5" y="527.0" font-size="11" fill="#000" text-anchor="middle" >16:30</text><text x="593.5" y="541.5" font-size="11" fill="#000" text-anchor="start" textLength="46.5" lengthAdjust="spacingAndGlyphs" >авг/25/11</text><text x="1078.3" y="543.0" font-size="11" fill="#2222AA" text-anchor="end" textLength="170.0" lengthAdjust="spacingAndGlyphs" >Learn to Trade Directly from Charts</text><rect x="584" y="547" width="556" height="9" fill="#FBFBFB" /><rect x="584" y="550" width="555" height="6" fill="url(#dots)"/><rect x="584" y="556" width="556" height="1" fill="#858585" /><rect x="1139" y="549" width="1" height="8" fill="#858585" /><polygon points="594,555 599.5,549.5 601,549.5 605,555" fill="#B4B4B4" shape-rendering="auto"/><polyline points="594,555 599.5,549.5" stroke="#000" stroke-width="1.1" fill="none" shape-rendering="auto"/><polygon points="610,549 620,549 616,554 613.5,554" fill="#A0A0A0" shape-rendering="auto"/><rect x="610" y="549" width="10" height="1" fill="#303030" /><rect x="1123" y="549" width="7" height="7" fill="#fff" /><path d="M1123.8,549.8 L1129.2,555.2 M1129.2,549.8 L1123.8,555.2" stroke="#808080" stroke-width="2.6" fill="none" shape-rendering="auto"/><rect x="587" y="557" width="492" height="141" fill="#000" /><rect x="588" y="558" width="490" height="139" fill="#fff" /><rect x="617" y="558" width="1" height="139" fill="#D8D8D8" /><rect x="666" y="558" width="1" height="139" fill="#D8D8D8" /><rect x="715" y="558" width="1" height="139" fill="#D8D8D8" /><rect x="764" y="558" width="1" height="139" fill="#D8D8D8" /><rect x="813" y="558" width="1" height="139" fill="#D8D8D8" /><rect x="861" y="558" width="1" height="139" fill="#D8D8D8" /><rect x="910" y="558" width="1" height="139" fill="#D8D8D8" /><rect x="959" y="558" width="1" height="139" fill="#D8D8D8" /><rect x="1008" y="558" width="1" height="139" fill="#D8D8D8" /><rect x="1057" y="558" width="1" height="139" fill="#D8D8D8" /><rect x="588" y="580" width="490" height="1" fill="#D8D8D8" /><rect x="588" y="610" width="490" height="1" fill="#D8D8D8" /><rect x="588" y="640" width="490" height="1" fill="#D8D8D8" /><rect x="588" y="669" width="490" height="1" fill="#D8D8D8" /><rect x="591" y="636" width="4" height="4" fill="#FF0000" /><rect x="599" y="640" width="4" height="2" fill="#FF0000" /><rect x="607" y="640" width="4" height="9" fill="#FF0000" /><rect x="615" y="640" width="4" height="10" fill="#FF0000" /><rect x="624" y="640" width="4" height="11" fill="#FF0000" /><rect x="632" y="640" width="4" height="8" fill="#FF0000" /><rect x="640" y="640" width="4" height="5" fill="#FF0000" /><rect x="648" y="640" width="4" height="5" fill="#FF0000" /><rect x="656" y="640" width="4" height="8" fill="#FF0000" /><rect x="664" y="640" width="4" height="7" fill="#FF0000" /><rect x="672" y="640" width="4" height="6" fill="#FF0000" /><rect x="680" y="640" width="4" height="4" fill="#FF0000" /><rect x="689" y="640" width="4" height="6" fill="#FF0000" /><rect x="697" y="640" width="4" height="6" fill="#FF0000" /><rect x="705" y="640" width="4" height="8" fill="#FF0000" /><rect x="713" y="640" width="4" height="10" fill="#FF0000" /><rect x="721" y="640" width="4" height="12" fill="#FF0000" /><rect x="729" y="640" width="4" height="16" fill="#FF0000" /><rect x="737" y="640" width="4" height="16" fill="#FF0000" /><rect x="746" y="640" width="4" height="18" fill="#FF0000" /><rect x="754" y="640" width="4" height="18" fill="#FF0000" /><rect x="762" y="640" width="4" height="24" fill="#FF0000" /><rect x="770" y="640" width="4" height="29" fill="#FF0000" /><rect x="778" y="640" width="4" height="30" fill="#FF0000" /><rect x="786" y="640" width="4" height="28" fill="#FF0000" /><rect x="794" y="640" width="4" height="27" fill="#FF0000" /><rect x="803" y="640" width="4" height="24" fill="#FF0000" /><rect x="811" y="640" width="4" height="18" fill="#FF0000" /><rect x="819" y="640" width="4" height="9" fill="#FF0000" /><rect x="827" y="640" width="4" height="1" fill="#FF0000" /><rect x="835" y="636" width="4" height="4" fill="#FF0000" /><rect x="843" y="632" width="4" height="8" fill="#FF0000" /><rect x="851" y="624" width="4" height="16" fill="#FF0000" /><rect x="859" y="619" width="4" height="21" fill="#FF0000" /><rect x="868" y="614" width="4" height="26" fill="#FF0000" /><rect x="876" y="616" width="4" height="24" fill="#FF0000" /><rect x="884" y="618" width="4" height="22" fill="#FF0000" /><rect x="892" y="621" width="4" height="19" fill="#FF0000" /><polyline points="593.0,572.0 608.5,576.2 633.5,583.8 651.0,586.2 676.0,592.0 701.0,596.2 723.5,603.8 746.0,615.0 766.0,628.8 786.0,647.5 801.0,660.0 813.5,667.5 822.2,670.0 831.0,670.0 845.0,668.0 856.0,662.5 864.0,657.5 879.0,646.2 894.5,636.2" fill="none" stroke="#0000C8" stroke-width="1" /><polyline points="593.0,567.5 601.0,576.2 609.0,584.5 617.2,588.8 626.0,592.5 641.0,590.0 650.0,591.2 661.0,595.5 683.5,597.5 691.0,601.2 699.0,601.2 715.0,611.2 731.0,625.0 748.0,636.2 756.0,641.2 764.0,652.5 772.2,665.0 780.0,673.8 796.0,683.0 804.8,687.0 812.8,686.2 821.0,680.0 829.0,673.8 845.0,660.0 853.0,647.5 864.0,635.0 871.5,626.2 879.0,621.2 886.5,620.0 894.5,617.0" fill="none" stroke="#009933" stroke-width="1" /><rect x="1079" y="580" width="3" height="1" fill="#FF0000" /><text x="1083.5" y="585.0" font-size="11" fill="#000" text-anchor="start" >10,00</text><rect x="1079" y="610" width="3" height="1" fill="#FF0000" /><text x="1083.5" y="614.8" font-size="11" fill="#000" text-anchor="start" >5,00</text><rect x="1079" y="640" width="3" height="1" fill="#FF0000" /><text x="1083.5" y="644.3" font-size="11" fill="#000" text-anchor="start" >0,00</text><rect x="1079" y="669" width="3" height="1" fill="#FF0000" /><text x="1083.5" y="673.8" font-size="11" fill="#000" text-anchor="start" >-5,00</text><rect x="1081.5" y="611" width="53" height="12" fill="#F0F0F0" stroke="#FF0000" stroke-width="1" shape-rendering="crispEdges"/><text x="1083.5" y="621.8" font-size="11" fill="#0000FF" text-anchor="start" >3,74</text><text x="588.0" y="567.7" font-size="11" fill="#009933" text-anchor="start" textLength="136.8" lengthAdjust="spacingAndGlyphs" >MACD(1) 12.0;26.0;9.0=3,74</text><text x="724.8" y="567.7" font-size="11" fill="#0000C8" text-anchor="start" textLength="23.8" lengthAdjust="spacingAndGlyphs" >/0,56</text><text x="748.5" y="567.7" font-size="11" fill="#FF0000" text-anchor="start" textLength="23.8" lengthAdjust="spacingAndGlyphs" >/3,17</text><rect x="584" y="698" width="556" height="9" fill="#FBFBFB" /><rect x="584" y="701" width="555" height="6" fill="url(#dots)"/><rect x="584" y="707" width="556" height="1" fill="#858585" /><rect x="1139" y="700" width="1" height="8" fill="#858585" /><polygon points="594,706 599.5,700.5 601,700.5 605,706" fill="#B4B4B4" shape-rendering="auto"/><polyline points="594,706 599.5,700.5" stroke="#000" stroke-width="1.1" fill="none" shape-rendering="auto"/><polygon points="610,700 620,700 616,705 613.5,705" fill="#A0A0A0" shape-rendering="auto"/><rect x="610" y="700" width="10" height="1" fill="#303030" /><rect x="1123" y="700" width="7" height="7" fill="#fff" /><path d="M1123.8,700.8 L1129.2,706.2 M1129.2,700.8 L1123.8,706.2" stroke="#808080" stroke-width="2.6" fill="none" shape-rendering="auto"/><rect x="587" y="708" width="492" height="142" fill="#000" /><rect x="588" y="709" width="490" height="140" fill="#fff" /><rect x="617" y="709" width="1" height="140" fill="#D8D8D8" /><rect x="666" y="709" width="1" height="140" fill="#D8D8D8" /><rect x="715" y="709" width="1" height="140" fill="#D8D8D8" /><rect x="764" y="709" width="1" height="140" fill="#D8D8D8" /><rect x="813" y="709" width="1" height="140" fill="#D8D8D8" /><rect x="861" y="709" width="1" height="140" fill="#D8D8D8" /><rect x="910" y="709" width="1" height="140" fill="#D8D8D8" /><rect x="959" y="709" width="1" height="140" fill="#D8D8D8" /><rect x="1008" y="709" width="1" height="140" fill="#D8D8D8" /><rect x="1057" y="709" width="1" height="140" fill="#D8D8D8" /><rect x="588" y="725" width="490" height="1" fill="#D8D8D8" /><rect x="588" y="752" width="490" height="1" fill="#D8D8D8" /><rect x="588" y="780" width="490" height="1" fill="#D8D8D8" /><rect x="588" y="807" width="490" height="1" fill="#D8D8D8" /><rect x="588" y="835" width="490" height="1" fill="#D8D8D8" /><line x1="593.5" y1="780" x2="1078" y2="780" stroke="#FF0000" stroke-width="1" stroke-dasharray="6.5 3.5"/><polyline points="593.0,763.0 601.0,772.5 609.0,803.2 617.2,782.5 626.0,787.0 634.0,774.5 642.0,777.5 650.0,793.0 658.5,791.2 666.5,781.2 674.8,770.0 682.8,760.5 691.0,762.5 699.0,766.2 707.0,773.8 715.0,790.0 723.0,801.2 731.0,806.2 739.5,788.8 748.0,808.8 756.0,809.5 764.0,828.8 772.2,837.5 780.0,839.2 788.5,827.5 796.0,828.2 804.8,821.2 812.8,802.5 821.0,795.0 829.0,778.0 837.0,781.2 845.0,761.2 853.0,723.0 861.0,725.0 864.0,723.8 870.2,719.2 878.0,728.8 886.5,730.5 894.5,738.8" fill="none" stroke="#FF0000" stroke-width="1" /><rect x="1079" y="725" width="3" height="1" fill="#FF0000" /><text x="1083.5" y="729.8" font-size="11" fill="#000" text-anchor="start" >40,00</text><rect x="1079" y="752" width="3" height="1" fill="#FF0000" /><text x="1083.5" y="756.8" font-size="11" fill="#000" text-anchor="start" >20,00</text><rect x="1079" y="780" width="3" height="1" fill="#FF0000" /><text x="1083.5" y="784.3" font-size="11" fill="#000" text-anchor="start" >0,00</text><rect x="1079" y="807" width="3" height="1" fill="#FF0000" /><text x="1083.5" y="811.3" font-size="11" fill="#000" text-anchor="start" >-20,00</text><rect x="1079" y="835" width="3" height="1" fill="#FF0000" /><text x="1083.5" y="839.3" font-size="11" fill="#000" text-anchor="start" >-40,00</text><rect x="1081.5" y="732" width="53" height="12" fill="#F0F0F0" stroke="#FF0000" stroke-width="1" shape-rendering="crispEdges"/><text x="1083.5" y="742.8" font-size="11" fill="#0000FF" text-anchor="start" >30,00</text><text x="588.0" y="719.0" font-size="11" fill="#FF0000" text-anchor="start" textLength="112.2" lengthAdjust="spacingAndGlyphs" >Momentum(1) 10=30,00</text><text x="588.0" y="129.5" font-size="11" fill="#000" text-anchor="start" textLength="135.0" lengthAdjust="spacingAndGlyphs" >US30 , 5 Minuten, # 38 / 562</text><text x="723.0" y="129.5" font-size="11" fill="#0000C8" text-anchor="start" textLength="127.0" lengthAdjust="spacingAndGlyphs" >, BOL(1) 20;2.0=11 327,64</text><text x="850.0" y="129.5" font-size="11" fill="#FF0000" text-anchor="start" textLength="53.0" lengthAdjust="spacingAndGlyphs" >/11 266,26</text><text x="903.0" y="129.5" font-size="11" fill="#FF00FF" text-anchor="start" textLength="110.0" lengthAdjust="spacingAndGlyphs" >, MAE(1) 12=11 307,13</text><text x="1013.0" y="129.5" font-size="11" fill="#C8C800" text-anchor="start" textLength="114.0" lengthAdjust="spacingAndGlyphs" >, MVG(1) 48=11 306,88</text><text x="1127.0" y="129.5" font-size="11" fill="#0000FF" text-anchor="start" textLength="40.0" lengthAdjust="spacingAndGlyphs" >, MVG(1)</text></g>
<g shape-rendering="auto"><defs><linearGradient id="gdoc" x1="0" y1="0" x2="0.6" y2="1"><stop offset="0" stop-color="#C9D7F7"/><stop offset="1" stop-color="#2F5FD0"/></linearGradient><linearGradient id="gbtn" x1="0" y1="0" x2="1" y2="1"><stop offset="0" stop-color="#FFFFFF"/><stop offset="1" stop-color="#CFE0FA"/></linearGradient><linearGradient id="gmin" x1="0" y1="0" x2="0" y2="1"><stop offset="0" stop-color="#D3E0EF"/><stop offset="0.48" stop-color="#C2D2E5"/><stop offset="0.5" stop-color="#A6B9CF"/><stop offset="1" stop-color="#B5C7DC"/></linearGradient><linearGradient id="gcls" x1="0" y1="0" x2="0" y2="1"><stop offset="0" stop-color="#EDB3A5"/><stop offset="0.48" stop-color="#DE8C79"/><stop offset="0.5" stop-color="#C5432B"/><stop offset="1" stop-color="#D9674C"/></linearGradient><linearGradient id="gcmin" x1="0" y1="0" x2="0" y2="1"><stop offset="0" stop-color="#CCD9EA"/><stop offset="0.48" stop-color="#C4D3E6"/><stop offset="0.5" stop-color="#B6C7DC"/><stop offset="1" stop-color="#BFCFE3"/></linearGradient><linearGradient id="gcminA" x1="0" y1="0" x2="0" y2="1"><stop offset="0" stop-color="#B9D0EC"/><stop offset="0.48" stop-color="#A8C3E4"/><stop offset="0.5" stop-color="#8BABD3"/><stop offset="1" stop-color="#A4C0E2"/></linearGradient><linearGradient id="gcclsA" x1="0" y1="0" x2="0" y2="1"><stop offset="0" stop-color="#E9A595"/><stop offset="0.48" stop-color="#D8806C"/><stop offset="0.5" stop-color="#BE3A22"/><stop offset="1" stop-color="#D4644A"/></linearGradient><radialGradient id="ggreen" cx="0.5" cy="0.45" r="0.55"><stop offset="0" stop-color="#7DD6AA"/><stop offset="0.6" stop-color="#3DB07C"/><stop offset="1" stop-color="#1C8A57"/></radialGradient></defs><rect x="4" y="4" width="1" height="1" fill="#4A4A4A"/><rect x="6" y="4" width="1" height="1" fill="#4A4A4A"/><rect x="8" y="4" width="1" height="1" fill="#4A4A4A"/><rect x="10" y="4" width="1" height="1" fill="#4A4A4A"/><rect x="12" y="4" width="1" height="1" fill="#4A4A4A"/><rect x="14" y="4" width="1" height="1" fill="#4A4A4A"/><rect x="2" y="6" width="1" height="1" fill="#4A4A4A"/><rect x="4" y="6" width="1" height="1" fill="#4A4A4A"/><rect x="6" y="6" width="1" height="1" fill="#4A4A4A"/><rect x="8" y="6" width="1" height="1" fill="#4A4A4A"/><rect x="10" y="6" width="1" height="1" fill="#4A4A4A"/><rect x="12" y="6" width="1" height="1" fill="#4A4A4A"/><rect x="14" y="6" width="1" height="1" fill="#4A4A4A"/><rect x="0" y="8" width="1" height="1" fill="#4A4A4A"/><rect x="2" y="8" width="1" height="1" fill="#4A4A4A"/><rect x="4" y="8" width="1" height="1" fill="#4A4A4A"/><rect x="6" y="8" width="1" height="1" fill="#4A4A4A"/><rect x="8" y="8" width="1" height="1" fill="#4A4A4A"/><rect x="10" y="8" width="1" height="1" fill="#4A4A4A"/><rect x="12" y="8" width="1" height="1" fill="#4A4A4A"/><rect x="14" y="8" width="1" height="1" fill="#4A4A4A"/><rect x="0" y="10" width="1" height="1" fill="#4A4A4A"/><rect x="2" y="10" width="1" height="1" fill="#4A4A4A"/><rect x="4" y="10" width="1" height="1" fill="#4A4A4A"/><rect x="6" y="10" width="1" height="1" fill="#4A4A4A"/><rect x="8" y="10" width="1" height="1" fill="#4A4A4A"/><rect x="10" y="10" width="1" height="1" fill="#4A4A4A"/><rect x="12" y="10" width="1" height="1" fill="#4A4A4A"/><rect x="14" y="10" width="1" height="1" fill="#4A4A4A"/><rect x="0" y="12" width="1" height="1" fill="#4A4A4A"/><rect x="2" y="12" width="1" height="1" fill="#4A4A4A"/><rect x="4" y="12" width="1" height="1" fill="#4A4A4A"/><rect x="6" y="12" width="1" height="1" fill="#4A4A4A"/><rect x="8" y="12" width="1" height="1" fill="#4A4A4A"/><rect x="10" y="12" width="1" height="1" fill="#4A4A4A"/><rect x="12" y="12" width="1" height="1" fill="#4A4A4A"/><rect x="14" y="12" width="1" height="1" fill="#4A4A4A"/><rect x="0" y="14" width="1" height="1" fill="#4A4A4A"/><rect x="2" y="14" width="1" height="1" fill="#4A4A4A"/><rect x="4" y="14" width="1" height="1" fill="#4A4A4A"/><rect x="6" y="14" width="1" height="1" fill="#4A4A4A"/><rect x="8" y="14" width="1" height="1" fill="#4A4A4A"/><rect x="10" y="14" width="1" height="1" fill="#4A4A4A"/><rect x="12" y="14" width="1" height="1" fill="#4A4A4A"/><rect x="14" y="14" width="1" height="1" fill="#4A4A4A"/><rect x="0" y="16" width="1" height="1" fill="#4A4A4A"/><rect x="2" y="16" width="1" height="1" fill="#4A4A4A"/><rect x="4" y="16" width="1" height="1" fill="#4A4A4A"/><rect x="6" y="16" width="1" height="1" fill="#4A4A4A"/><rect x="8" y="16" width="1" height="1" fill="#4A4A4A"/><rect x="10" y="16" width="1" height="1" fill="#4A4A4A"/><rect x="12" y="16" width="1" height="1" fill="#4A4A4A"/><rect x="14" y="16" width="1" height="1" fill="#4A4A4A"/><rect x="4" y="47" width="1" height="1" fill="#A0A0A0"/><rect x="5" y="46" width="1" height="1" fill="#C8C8C8"/><rect x="4" y="50" width="1" height="1" fill="#A0A0A0"/><rect x="5" y="49" width="1" height="1" fill="#C8C8C8"/><rect x="4" y="53" width="1" height="1" fill="#A0A0A0"/><rect x="5" y="52" width="1" height="1" fill="#C8C8C8"/><rect x="4" y="56" width="1" height="1" fill="#A0A0A0"/><rect x="5" y="55" width="1" height="1" fill="#C8C8C8"/><rect x="4" y="59" width="1" height="1" fill="#A0A0A0"/><rect x="5" y="58" width="1" height="1" fill="#C8C8C8"/><rect x="4" y="62" width="1" height="1" fill="#A0A0A0"/><rect x="5" y="61" width="1" height="1" fill="#C8C8C8"/><rect x="4" y="65" width="1" height="1" fill="#A0A0A0"/><rect x="5" y="64" width="1" height="1" fill="#C8C8C8"/><path d="M16.5,49.5 H24.5 L27.5,52.5 V62.5 H16.5 Z" fill="url(#gdoc)" stroke="#000" stroke-width="1"/><path d="M24.5,49.5 V52.5 H27.5" fill="#fff" stroke="#000" stroke-width="1"/><rect x="36.5" y="49.5" width="13" height="13" fill="#4F78D6" stroke="#1A1A1A"/><rect x="39.5" y="50" width="7" height="4" fill="#C9D6F0"/><rect x="42.0" y="50" width="4" height="3" fill="#F2C94C"/><rect x="38.5" y="56" width="9" height="6.5" fill="#FFFFFF"/><rect x="38.5" y="55.5" width="9" height="1.5" fill="#F6E7A8"/><rect x="57.5" y="49.5" width="13" height="13" fill="#4F78D6" stroke="#1A1A1A"/><rect x="60.5" y="50" width="7" height="4" fill="#C9D6F0"/><rect x="63.0" y="50" width="4" height="3" fill="#F2C94C"/><rect x="59.5" y="56" width="9" height="6.5" fill="#FFFFFF"/><rect x="59.5" y="55.5" width="9" height="1.5" fill="#F6E7A8"/><rect x="62.5" y="60" width="1.4" height="1.2" fill="#2038C0"/><rect x="64.5" y="60" width="1.4" height="1.2" fill="#2038C0"/><rect x="66.5" y="60" width="1.4" height="1.2" fill="#2038C0"/><rect x="81.5" y="47.5" width="20" height="18" rx="3" fill="#DCDCDC" stroke="#5A5A5A"/><rect x="82.5" y="48.5" width="18" height="16" rx="2" fill="none" stroke="#F4F4F4"/><path d="M85.5,50 V64 M83,62.5 H99" stroke="#3B63C8" stroke-width="1" fill="none"/><path d="M89.5,48 V57 M94,48 V60 M98,51 V60" stroke="#5070C8" stroke-width="0.8"/><rect x="84.3" y="57" width="2.6" height="5.5" fill="#1F6F1F"/><rect x="88.2" y="50" width="2.6" height="5" fill="#B0202A"/><rect x="92.7" y="50" width="2.6" height="8" fill="#B0202A"/><rect x="96.8" y="53" width="2.6" height="5" fill="#1F6F1F"/><rect x="105.5" y="49.5" width="13.5" height="13" rx="1" fill="#E0E9F8" stroke="#8AB0EE"/><rect x="115.5" y="51" width="2.2" height="6.5" fill="#fff"/><path d="M106.5,53.6 V63.6 M104,61.5 H106.5 M106.5,57.7 H109 M110.6,48 V55.7 M108.5,50.5 H110.6 M110.6,54 H112.6 M114.4,49.2 V59.6 M112.4,51 H114.4 M114.4,57.5 H118.3 M118.3,50 V60.5 M118.3,52.5 H120" stroke="#2A4DA8" stroke-width="1.3" fill="none"/><rect x="126.5" y="49.5" width="13" height="13" rx="1" fill="#E3EAF7" stroke="#8AB0EE"/><polyline points="125,57 130.5,54.3 134.7,58.3 140.8,52.5" fill="none" stroke="#2A4DA8" stroke-width="1.5"/><rect x="192.5" y="47.5" width="20" height="18" rx="3" fill="#DCDCDC" stroke="#5A5A5A"/><rect x="153.5" y="49.5" width="13" height="13" fill="url(#gbtn)" stroke="#7FA6EA"/><text x="160" y="60" font-size="10.5" font-weight="bold" fill="#2E4E8E" stroke="#2E4E8E" stroke-width="0.35" text-anchor="middle">T</text><rect x="174.5" y="49.5" width="13" height="13" fill="url(#gbtn)" stroke="#7FA6EA"/><text x="181" y="60" font-size="10.5" font-weight="bold" fill="#2E4E8E" stroke="#2E4E8E" stroke-width="0.35" text-anchor="middle">1</text><rect x="195.5" y="49.5" width="13" height="13" fill="url(#gbtn)" stroke="#7FA6EA"/><text x="202" y="60" font-size="10.5" font-weight="bold" fill="#2E4E8E" stroke="#2E4E8E" stroke-width="0.35" text-anchor="middle">5</text><rect x="216.5" y="49.5" width="13" height="13" fill="url(#gbtn)" stroke="#7FA6EA"/><text x="223" y="60" font-size="10.5" font-weight="bold" fill="#2E4E8E" stroke="#2E4E8E" stroke-width="0.35" text-anchor="middle" textLength="12.5" lengthAdjust="spacingAndGlyphs">10</text><rect x="237.5" y="49.5" width="13" height="13" fill="url(#gbtn)" stroke="#7FA6EA"/><text x="244" y="60" font-size="10.5" font-weight="bold" fill="#2E4E8E" stroke="#2E4E8E" stroke-width="0.35" text-anchor="middle" textLength="12.5" lengthAdjust="spacingAndGlyphs">15</text><rect x="258.5" y="49.5" width="13" height="13" fill="url(#gbtn)" stroke="#7FA6EA"/><text x="265" y="60" font-size="10.5" font-weight="bold" fill="#2E4E8E" stroke="#2E4E8E" stroke-width="0.35" text-anchor="middle" textLength="12.5" lengthAdjust="spacingAndGlyphs">30</text><rect x="279.5" y="49.5" width="13" height="13" fill="url(#gbtn)" stroke="#7FA6EA"/><text x="286" y="60" font-size="10.5" font-weight="bold" fill="#2E4E8E" stroke="#2E4E8E" stroke-width="0.35" text-anchor="middle" textLength="12.5" lengthAdjust="spacingAndGlyphs">1H</text><rect x="300.5" y="49.5" width="13" height="13" fill="url(#gbtn)" stroke="#7FA6EA"/><text x="307" y="60" font-size="10.5" font-weight="bold" fill="#2E4E8E" stroke="#2E4E8E" stroke-width="0.35" text-anchor="middle" textLength="12.5" lengthAdjust="spacingAndGlyphs">2H</text><rect x="321.5" y="49.5" width="13" height="13" fill="url(#gbtn)" stroke="#7FA6EA"/><text x="328" y="60" font-size="10.5" font-weight="bold" fill="#2E4E8E" stroke="#2E4E8E" stroke-width="0.35" text-anchor="middle" textLength="12.5" lengthAdjust="spacingAndGlyphs">4H</text><rect x="342.5" y="49.5" width="13" height="13" fill="url(#gbtn)" stroke="#7FA6EA"/><text x="349" y="60" font-size="10.5" font-weight="bold" fill="#2E4E8E" stroke="#2E4E8E" stroke-width="0.35" text-anchor="middle" textLength="12.5" lengthAdjust="spacingAndGlyphs">8H</text><rect x="363.5" y="49.5" width="13" height="13" fill="url(#gbtn)" stroke="#7FA6EA"/><text x="370" y="60" font-size="10.5" font-weight="bold" fill="#2E4E8E" stroke="#2E4E8E" stroke-width="0.35" text-anchor="middle">D</text><rect x="384.5" y="49.5" width="13" height="13" fill="url(#gbtn)" stroke="#7FA6EA"/><text x="391" y="60" font-size="10.5" font-weight="bold" fill="#2E4E8E" stroke="#2E4E8E" stroke-width="0.35" text-anchor="middle">W</text><rect x="405.5" y="49.5" width="13" height="13" fill="url(#gbtn)" stroke="#7FA6EA"/><text x="412" y="60" font-size="10.5" font-weight="bold" fill="#2E4E8E" stroke="#2E4E8E" stroke-width="0.35" text-anchor="middle">M</text><path d="M437.5,48.5 L435,63.5 M443.5,48.5 L441,63.5 M431.5,53.5 H447 M431,59 H446.5" stroke="#0A3CA0" stroke-width="2.1" fill="none"/><path d="M457.5,59.5 L460,63 L461.5,59.5 Z" fill="#fff" stroke="#A0A0A0" stroke-width="0.9"/><ellipse cx="459.7" cy="54.6" rx="6" ry="5.4" fill="#fff" stroke="#A8A8A8"/><path d="M458,59.3 L460,62 L461,59.3 Z" fill="#fff"/><rect x="458.7" y="51" width="2" height="1.8" fill="#1818E0"/><rect x="458.7" y="53.6" width="2" height="4.2" fill="#1818E0"/><rect x="474.8" y="49" width="2.6" height="14.5" rx="1" fill="#2F55B8"/><rect x="473.5" y="54" width="1.5" height="3" fill="#2F55B8"/><path d="M482.5,48.5 V55.5 M485.5,48.5 V55.5 M480.5,50.5 H487.5 M480.5,53.5 H487.5" stroke="#2F55B8" stroke-width="1.1"/><path d="M478,58 H489" stroke="#2F55B8" stroke-width="1.6" stroke-dasharray="1.6 1.2"/><path d="M494,63.5 V56 H496 V54 H498 V57 H500 V49 H502 V53 H504 V57 H506 V54 H508 V51 H510 V63.5 Z" fill="#8E8E8E"/><rect x="523.5" y="49" width="3.6" height="14" rx="1" fill="#3556B5"/><rect x="522.2" y="53" width="1.5" height="5" fill="#3556B5"/><rect x="530.5" y="48" width="3.6" height="13" rx="1" fill="#3556B5"/><rect x="534" y="51" width="1.5" height="5" fill="#5B7BD0"/><path d="M522.5,63.5 L536.5,49" stroke="#111" stroke-width="1.3"/><rect x="545.5" y="49" width="3.6" height="14" rx="1" fill="#3556B5"/><rect x="544.2" y="53" width="1.5" height="5" fill="#3556B5"/><rect x="552.5" y="48" width="3.6" height="13" rx="1" fill="#3556B5"/><rect x="556" y="51" width="1.5" height="5" fill="#5B7BD0"/><path d="M543.5,48 L558,62.5" stroke="#111" stroke-width="1.3"/><rect x="566.0" y="49" width="3.6" height="14" rx="1" fill="#3556B5"/><rect x="564.7" y="53" width="1.5" height="5" fill="#3556B5"/><rect x="573.0" y="48" width="3.6" height="13" rx="1" fill="#3556B5"/><rect x="576.5" y="51" width="1.5" height="5" fill="#5B7BD0"/><path d="M563,54.6 H579" stroke="#111" stroke-width="1.2"/><rect x="587.0" y="49" width="3.6" height="14" rx="1" fill="#3556B5"/><rect x="585.7" y="53" width="1.5" height="5" fill="#3556B5"/><rect x="594.0" y="48" width="3.6" height="13" rx="1" fill="#3556B5"/><rect x="597.5" y="51" width="1.5" height="5" fill="#5B7BD0"/><path d="M584,51.5 L597,63.5" stroke="#111" stroke-width="1.3"/><rect x="620.0" y="49" width="3.6" height="14" rx="1" fill="#9A9A9A"/><rect x="618.7" y="53" width="1.5" height="5" fill="#9A9A9A"/><rect x="627.0" y="48" width="3.6" height="13" rx="1" fill="#9A9A9A"/><rect x="630.5" y="51" width="1.5" height="5" fill="#9A9A9A"/><path d="M619,63 L632,49.5" stroke="#8A8A8A" stroke-width="1.6"/><path d="M646,50.5 L657.5,61.5 M657.5,50.5 L646,61.5" stroke="#D3123C" stroke-width="1.8" stroke-linecap="round"/><path d="M667,52 L679,61.5 M679,52 L667,61.5" stroke="#2A50B8" stroke-width="5.4" stroke-linecap="round"/><path d="M667.3,52.3 L678.7,61.2 M678.7,52.3 L667.3,61.2" stroke="#CC2A30" stroke-width="3.4" stroke-linecap="round"/><rect x="696.5" y="48.5" width="8" height="6" fill="#fff" stroke="#8A8A8A"/><rect x="692.5" y="53.5" width="16" height="7" rx="2" fill="#C4D6E2" stroke="#6F7F8A"/><rect x="693.5" y="56.5" width="14" height="1.2" fill="#8FA4B2"/><rect x="696.5" y="59.5" width="8" height="4" fill="#fff" stroke="#8A8A8A"/><path d="M713.5,48.5 H721.5 L724.5,51.5 V63.5 H713.5 Z" fill="#fff" stroke="#111"/><circle cx="722.8" cy="56.8" r="3.6" fill="#BFD6F4" stroke="#2F73D8" stroke-width="1.3"/><path d="M725.5,59.5 L728.8,62.8" stroke="#8B5A2B" stroke-width="1.8"/><path d="M750.2,58 L755.7,63.3" stroke="#8B5A2B" stroke-width="2.2"/><circle cx="746.2" cy="54" r="5.4" fill="#7FB2F4" stroke="#1F6FE0" stroke-width="1.6"/><path d="M743.2,54 H749.2" stroke="#0A2A6A" stroke-width="1.8"/><path d="M746.2,51 V57" stroke="#0A2A6A" stroke-width="1.8"/><path d="M771.2,58 L776.7,63.3" stroke="#8B5A2B" stroke-width="2.2"/><circle cx="767.2" cy="54" r="5.4" fill="#7FB2F4" stroke="#1F6FE0" stroke-width="1.6"/><path d="M764.2,54 H770.2" stroke="#0A2A6A" stroke-width="1.8"/><path d="M782,48.5 H798 M782,63.5 H798" stroke="#8E8E8E" stroke-width="1"/><path d="M793,58.5 L797.5,62.5" stroke="#8FA0C0" stroke-width="1.8"/><circle cx="789.3" cy="54.5" r="5.6" fill="#DDE3EE" stroke="#A9B4CC" stroke-width="1.4"/><path d="M786,54.5 H793" stroke="#8FA0C0" stroke-width="1.3"/><circle cx="1122" cy="54" r="7" fill="url(#ggreen)"/><rect x="1130.5" y="47.5" width="20" height="18" rx="3" fill="#E2E2E2" stroke="#5A5A5A"/><path d="M1134,55.5 H1140 M1140,51.5 V59.5 M1142,53 V58 M1144.5,51.5 V59.5 M1140,58.5 H1145" stroke="#111" stroke-width="1" fill="none"/><path d="M1046.5,-1 V13 a4.5,4.5 0 0 0 4.5,4.5 H1143 a4.5,4.5 0 0 0 4.5,-4.5 V-1 Z" fill="url(#gmin)" stroke="#3C4A5E"/><path d="M1101,-1 V17.5 H1143 a4.5,4.5 0 0 0 4.5,-4.5 V-1 Z" fill="url(#gcls)" stroke="#5A1F18"/><path d="M1074.5,0 V17.5" stroke="#3C4A5E"/><path d="M1075.5,0 V17" stroke="#E4ECF6" opacity="0.7"/><path d="M1047.5,0 V13" stroke="#E4ECF6" opacity="0.7"/><rect x="1055.5" y="8.5" width="11.5" height="4" rx="1" fill="#fff" stroke="#3A4358"/><rect x="1084.5" y="2.5" width="8.5" height="8" rx="1" fill="#fff" stroke="#3A4358"/><rect x="1086.5" y="4.5" width="4.5" height="4" fill="#B5C7DC" stroke="#3A4358" stroke-width="0.8"/><rect x="1081.5" y="5.5" width="8.5" height="8" rx="1" fill="#fff" stroke="#3A4358"/><rect x="1084" y="8" width="3.5" height="3" fill="#A6B9CF" stroke="#3A4358" stroke-width="0.8"/><path d="M1120.4,3.6 L1130,12.4 M1130,3.6 L1120.4,12.4" stroke="#3A3040" stroke-width="4.8" stroke-linecap="butt"/><path d="M1120.9,4 L1129.5,12 M1129.5,4 L1120.9,12" stroke="#fff" stroke-width="3" stroke-linecap="butt"/><path d="M1144,-0.5 L1136,14.5 Q1135.5,15.5 1137,15.5 H1152 V-0.5 Z" fill="#EDEDED" stroke="#9A9A9A" stroke-width="0.9"/><rect x="1143" y="4" width="2" height="6.5" fill="#111"/><rect x="1143" y="11.5" width="2" height="2" fill="#111"/><rect x="482.5" y="99.5" width="27" height="16" rx="2.5" fill="url(#gcmin)" stroke="#8FA0B8"/><rect x="483.5" y="100.5" width="25" height="14" rx="2" fill="none" stroke="#fff" opacity="0.45"/><rect x="512.5" y="99.5" width="27" height="16" rx="2.5" fill="url(#gcmin)" stroke="#8FA0B8"/><rect x="513.5" y="100.5" width="25" height="14" rx="2" fill="none" stroke="#fff" opacity="0.45"/><rect x="542.0" y="99.5" width="27.5" height="16" rx="2.5" fill="url(#gcmin)" stroke="#8FA0B8"/><rect x="543.0" y="100.5" width="25.5" height="14" rx="2" fill="none" stroke="#fff" opacity="0.45"/><rect x="491.0" y="107.5" width="10" height="3.5" rx="1" fill="#fff" stroke="#4A5468"/><rect x="521.5" y="103.5" width="9.5" height="8" rx="1" fill="#fff" stroke="#4A5468"/><rect x="524.0" y="106.3" width="4.5" height="2.6" fill="#9DB5D5" stroke="#4A5468" stroke-width="0.8"/><path d="M551.3,103.2 L561.3,111.6 M561.3,103.2 L551.3,111.6" stroke="#4A4458" stroke-width="4.4" stroke-linecap="butt"/><path d="M551.8,103.6 L560.8,111.2 M560.8,103.6 L551.8,111.2" stroke="#fff" stroke-width="2.7" stroke-linecap="butt"/><rect x="1056.5" y="99.5" width="27" height="16" rx="2.5" fill="url(#gcminA)" stroke="#5F7897"/><rect x="1057.5" y="100.5" width="25" height="14" rx="2" fill="none" stroke="#fff" opacity="0.45"/><rect x="1086.5" y="99.5" width="27" height="16" rx="2.5" fill="url(#gcminA)" stroke="#5F7897"/><rect x="1087.5" y="100.5" width="25" height="14" rx="2" fill="none" stroke="#fff" opacity="0.45"/><rect x="1116.0" y="99.5" width="27.5" height="16" rx="2.5" fill="url(#gcclsA)" stroke="#6A241C"/><rect x="1117.0" y="100.5" width="25.5" height="14" rx="2" fill="none" stroke="#fff" opacity="0.45"/><rect x="1065.0" y="107.5" width="10" height="3.5" rx="1" fill="#fff" stroke="#4A5468"/><rect x="1095.5" y="103.5" width="9.5" height="8" rx="1" fill="#fff" stroke="#4A5468"/><rect x="1098.0" y="106.3" width="4.5" height="2.6" fill="#9DB5D5" stroke="#4A5468" stroke-width="0.8"/><path d="M1125.3,103.2 L1135.3,111.6 M1135.3,103.2 L1125.3,111.6" stroke="#4A4458" stroke-width="4.4" stroke-linecap="butt"/><path d="M1125.8,103.6 L1134.8,111.2 M1134.8,103.6 L1125.8,111.2" stroke="#fff" stroke-width="2.7" stroke-linecap="butt"/><rect x="8" y="100" width="1" height="1" fill="#E6C79C"/><rect x="8" y="102" width="1" height="1" fill="#E6C79C"/><rect x="8" y="104" width="1" height="1" fill="#E6C79C"/><rect x="8" y="106" width="1" height="1" fill="#E6C79C"/><rect x="8" y="108" width="1" height="1" fill="#2A2A2A"/><rect x="8" y="110" width="1" height="1" fill="#2A2A2A"/><rect x="10" y="100" width="1" height="1" fill="#E6C79C"/><rect x="10" y="102" width="1" height="1" fill="#E6C79C"/><rect x="10" y="104" width="1" height="1" fill="#E6C79C"/><rect x="10" y="106" width="1" height="1" fill="#2A2A2A"/><rect x="10" y="108" width="1" height="1" fill="#2A2A2A"/><rect x="10" y="110" width="1" height="1" fill="#2A2A2A"/><rect x="13" y="100" width="1" height="1" fill="#E6C79C"/><rect x="13" y="102" width="1" height="1" fill="#2A2A2A"/><rect x="13" y="104" width="1" height="1" fill="#2A2A2A"/><rect x="13" y="106" width="1" height="1" fill="#2A2A2A"/><rect x="13" y="108" width="1" height="1" fill="#2A2A2A"/><rect x="13" y="110" width="1" height="1" fill="#2A2A2A"/><rect x="15" y="100" width="1" height="1" fill="#E6C79C"/><rect x="15" y="102" width="1" height="1" fill="#E6C79C"/><rect x="15" y="104" width="1" height="1" fill="#2A2A2A"/><rect x="15" y="106" width="1" height="1" fill="#2A2A2A"/><rect x="15" y="108" width="1" height="1" fill="#2A2A2A"/><rect x="15" y="110" width="1" height="1" fill="#2A2A2A"/><rect x="17" y="100" width="1" height="1" fill="#E6C79C"/><rect x="17" y="102" width="1" height="1" fill="#E6C79C"/><rect x="17" y="104" width="1" height="1" fill="#E6C79C"/><rect x="17" y="106" width="1" height="1" fill="#2A2A2A"/><rect x="17" y="108" width="1" height="1" fill="#2A2A2A"/><rect x="17" y="110" width="1" height="1" fill="#2A2A2A"/><rect x="20" y="100" width="1" height="1" fill="#E6C79C"/><rect x="20" y="102" width="1" height="1" fill="#2A2A2A"/><rect x="20" y="104" width="1" height="1" fill="#2A2A2A"/><rect x="20" y="106" width="1" height="1" fill="#2A2A2A"/><rect x="20" y="108" width="1" height="1" fill="#2A2A2A"/><rect x="20" y="110" width="1" height="1" fill="#2A2A2A"/><rect x="581" y="100" width="1" height="1" fill="#E6C79C"/><rect x="581" y="102" width="1" height="1" fill="#E6C79C"/><rect x="581" y="104" width="1" height="1" fill="#E6C79C"/><rect x="581" y="106" width="1" height="1" fill="#E6C79C"/><rect x="581" y="108" width="1" height="1" fill="#2A2A2A"/><rect x="581" y="110" width="1" height="1" fill="#2A2A2A"/><rect x="583" y="100" width="1" height="1" fill="#E6C79C"/><rect x="583" y="102" width="1" height="1" fill="#E6C79C"/><rect x="583" y="104" width="1" height="1" fill="#E6C79C"/><rect x="583" y="106" width="1" height="1" fill="#2A2A2A"/><rect x="583" y="108" width="1" height="1" fill="#2A2A2A"/><rect x="583" y="110" width="1" height="1" fill="#2A2A2A"/><rect x="586" y="100" width="1" height="1" fill="#E6C79C"/><rect x="586" y="102" width="1" height="1" fill="#2A2A2A"/><rect x="586" y="104" width="1" height="1" fill="#2A2A2A"/><rect x="586" y="106" width="1" height="1" fill="#2A2A2A"/><rect x="586" y="108" width="1" height="1" fill="#2A2A2A"/><rect x="586" y="110" width="1" height="1" fill="#2A2A2A"/><rect x="588" y="100" width="1" height="1" fill="#E6C79C"/><rect x="588" y="102" width="1" height="1" fill="#E6C79C"/><rect x="588" y="104" width="1" height="1" fill="#2A2A2A"/><rect x="588" y="106" width="1" height="1" fill="#2A2A2A"/><rect x="588" y="108" width="1" height="1" fill="#2A2A2A"/><rect x="588" y="110" width="1" height="1" fill="#2A2A2A"/><rect x="590" y="100" width="1" height="1" fill="#E6C79C"/><rect x="590" y="102" width="1" height="1" fill="#E6C79C"/><rect x="590" y="104" width="1" height="1" fill="#E6C79C"/><rect x="590" y="106" width="1" height="1" fill="#2A2A2A"/><rect x="590" y="108" width="1" height="1" fill="#2A2A2A"/><rect x="590" y="110" width="1" height="1" fill="#2A2A2A"/><rect x="593" y="100" width="1" height="1" fill="#E6C79C"/><rect x="593" y="102" width="1" height="1" fill="#2A2A2A"/><rect x="593" y="104" width="1" height="1" fill="#2A2A2A"/><rect x="593" y="106" width="1" height="1" fill="#2A2A2A"/><rect x="593" y="108" width="1" height="1" fill="#2A2A2A"/><rect x="593" y="110" width="1" height="1" fill="#2A2A2A"/></g>
<g id="chrome">
<text x="21.2" y="14.6" font-size="12" fill="#000" text-anchor="start" textLength="73.2" lengthAdjust="spacingAndGlyphs" >Chart window</text>
<text x="5.0" y="36.0" font-size="12" fill="#000" text-anchor="start" textLength="81.0" lengthAdjust="spacingAndGlyphs" >Arbeitsbereiche</text>
<text x="97.0" y="36.0" font-size="12" fill="#000" text-anchor="start" textLength="62.0" lengthAdjust="spacingAndGlyphs" >Währungen</text>
<text x="170.5" y="36.0" font-size="12" fill="#000" text-anchor="start" textLength="64.0" lengthAdjust="spacingAndGlyphs" >Chart Typen</text>
<text x="245.0" y="36.0" font-size="12" fill="#000" text-anchor="start" textLength="71.0" lengthAdjust="spacingAndGlyphs" >Zeit Intervalle</text>
<text x="326.5" y="36.0" font-size="12" fill="#000" text-anchor="start" textLength="66.0" lengthAdjust="spacingAndGlyphs" >Anschauung</text>
<text x="403.5" y="36.0" font-size="12" fill="#000" text-anchor="start" textLength="55.0" lengthAdjust="spacingAndGlyphs" >Bearbeiten</text>
<text x="470.0" y="36.0" font-size="12" fill="#000" text-anchor="start" textLength="31.5" lengthAdjust="spacingAndGlyphs" >Linien</text>
<text x="512.5" y="36.0" font-size="12" fill="#000" text-anchor="start" textLength="60.0" lengthAdjust="spacingAndGlyphs" >Indikatoren</text>
<text x="584.0" y="36.0" font-size="12" fill="#000" text-anchor="start" textLength="31.5" lengthAdjust="spacingAndGlyphs" >Zoom</text>
<text x="627.0" y="36.0" font-size="12" fill="#000" text-anchor="start" textLength="70.5" lengthAdjust="spacingAndGlyphs" >Einstellungen</text>
<text x="708.5" y="36.0" font-size="12" fill="#000" text-anchor="start" textLength="37.5" lengthAdjust="spacingAndGlyphs" >Fenster</text>
<text x="757.5" y="36.0" font-size="12" fill="#000" text-anchor="start" textLength="24.5" lengthAdjust="spacingAndGlyphs" >Hilfe</text>
<text x="6.8" y="84.6" font-size="14" fill="#000" text-anchor="start" >∗</text>
<text x="20.8" y="82.7" font-size="11" fill="#000" text-anchor="start" textLength="19.1" lengthAdjust="spacingAndGlyphs" >ASD</text>
<text x="26.5" y="110.7" font-size="12" fill="#000" text-anchor="start" textLength="211.5" lengthAdjust="spacingAndGlyphs" >GER30 - 5 727,00 - 14:54:17  25 авг (MSD)</text>
<text x="599.5" y="110.7" font-size="12" fill="#000" text-anchor="start" textLength="210.5" lengthAdjust="spacingAndGlyphs" >US30 - 11 314,00 - 14:53:56  25 авг (MSD)</text>
</g>
</svg>
</body></html>
